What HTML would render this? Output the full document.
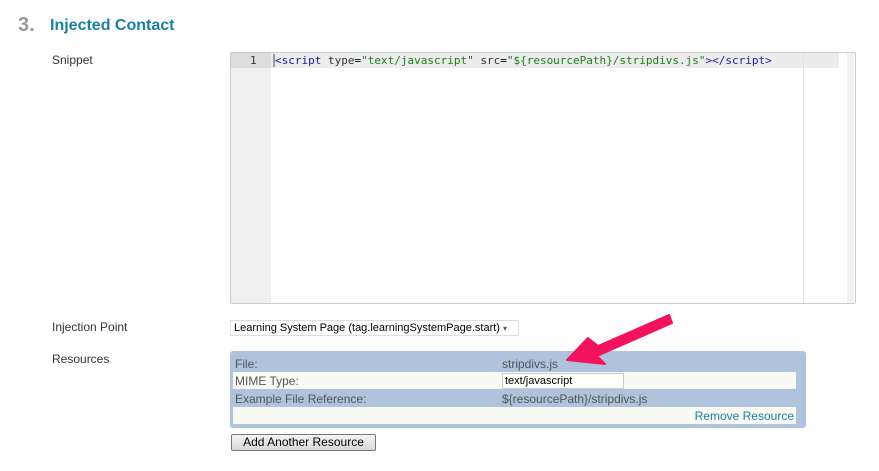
<!DOCTYPE html>
<html><head><style>
body{margin:0;width:879px;height:471px;background:#fff;font-family:"Liberation Sans",Arial,sans-serif;position:relative;overflow:hidden;}
.a{position:absolute;}
.lbl{font-size:12px;color:#333;}
.code{font-family:"DejaVu Sans Mono","Liberation Mono",monospace;font-size:11px;}
.row{position:absolute;left:233px;width:563px;height:17px;font-size:12px;color:#555;}
.row span{position:absolute;top:2px;}
</style></head><body>
<div class="a" style="left:18px;top:14px;font-size:20px;font-weight:bold;color:#999;">3.</div>
<div class="a" style="left:50px;top:17px;font-size:16px;font-weight:bold;color:#1a7fa6;">Injected Contact</div>
<div class="a lbl" style="left:52px;top:53px;">Snippet</div>
<div class="a lbl" style="left:52px;top:320px;">Injection Point</div>
<div class="a lbl" style="left:52px;top:352px;">Resources</div>

<div class="a" style="left:230px;top:52px;width:624px;height:250px;border:1px solid #ccc;border-radius:2px;background:#fff;"></div>
<div class="a" style="left:231px;top:53px;width:40px;height:250px;background:#f0f0f0;"></div>
<div class="a" style="left:231px;top:53px;width:40px;height:15px;background:#dcdcdc;"></div>
<div class="a" style="left:271px;top:53px;width:568px;height:15px;background:#ececec;"></div>
<div class="a" style="left:803px;top:53px;width:1px;height:250px;background:#e3e3e3;"></div>
<div class="a" style="left:847px;top:53px;width:7px;height:250px;background:#f2f2f2;"></div>
<div class="a" style="left:273px;top:54px;width:2px;height:13px;background:#999;"></div>
<div class="a code" style="left:250px;top:54px;color:#333;">1</div>
<div class="a code" style="left:275px;top:54px;white-space:pre;"><span style="color:#1a1aa6">&lt;script</span> <span style="color:#333">type</span>=<span style="color:#1a7f1a">"text/javascript"</span> <span style="color:#333">src</span>=<span style="color:#1a7f1a">"${resourcePath}/stripdivs.js"</span><span style="color:#1a1aa6">&gt;&lt;/script&gt;</span></div>

<div class="a" style="left:230px;top:320px;border:1px solid #ddd;font-size:11px;color:#000;line-height:15px;padding-left:3px;box-sizing:border-box;width:289px;height:16px;">Learning System Page (tag.learningSystemPage.start) <span style="font-size:8px;color:#555;">▾</span></div>

<div class="a" style="left:230px;top:351px;width:576px;height:77px;background:#afc3dd;border-radius:3px;"></div>
<div class="row" style="top:355px;"><span style="left:2px">File:</span><span style="left:269px">stripdivs.js</span></div>
<div class="row" style="top:372px;background:#fafaf4;"><span style="left:2px">MIME Type:</span></div>
<div class="a" style="left:502px;top:373px;width:118px;height:14px;border:1px solid #ccc;background:#fff;font-size:11px;color:#000;line-height:14px;padding-left:2px;">text/javascript</div>
<div class="row" style="top:390px;"><span style="left:2px">Example File Reference:</span><span style="left:269px">${resourcePath}/stripdivs.js</span></div>
<div class="row" style="top:407px;background:#fafaf4;"><span style="right:2px;color:#1a7fa6;">Remove Resource</span></div>

<div class="a" style="left:231px;top:434px;width:143px;height:15px;border:1px solid #777;border-radius:2px;background:linear-gradient(#f4f4f4,#d8d8d8);font-size:12px;color:#000;text-align:center;line-height:15px;">Add Another Resource</div>

<svg class="a" style="left:0;top:0" width="879" height="471">
<path d="M669 315 L598 346 L588 338 L567 360 L605 364 L597 356 L672 323 Z" fill="#f2135e" stroke="#f2135e" stroke-width="2" stroke-linejoin="round"/>
</svg>
</body></html>
